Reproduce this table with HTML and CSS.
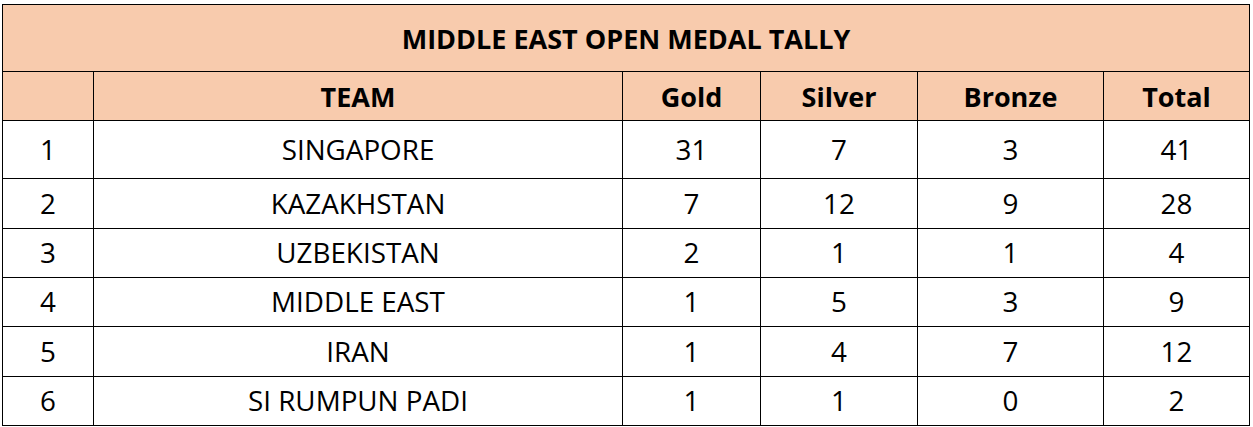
FILE: index.html
```html
<!DOCTYPE html>
<html lang="en">
<head>
<meta charset="utf-8">
<title>Middle East Open Medal Tally</title>
<link rel="stylesheet" href="styles.css">
</head>
<body>
<div class="sheet">
  <table class="tally">
    <colgroup>
      <col class="c-rank">
      <col class="c-team">
      <col class="c-gold">
      <col class="c-silver">
      <col class="c-bronze">
      <col class="c-total">
    </colgroup>
    <thead>
      <tr class="r-title"><th colspan="6">MIDDLE EAST OPEN MEDAL TALLY</th></tr>
      <tr class="r-head">
        <th></th><th>TEAM</th><th>Gold</th><th>Silver</th><th>Bronze</th><th>Total</th>
      </tr>
    </thead>
    <tbody>
      <tr class="r-first"><td>1</td><td>SINGAPORE</td><td>31</td><td>7</td><td>3</td><td>41</td></tr>
      <tr class="r-50"><td>2</td><td>KAZAKHSTAN</td><td>7</td><td>12</td><td>9</td><td>28</td></tr>
      <tr class="r-49"><td>3</td><td>UZBEKISTAN</td><td>2</td><td>1</td><td>1</td><td>4</td></tr>
      <tr class="r-49"><td>4</td><td>MIDDLE EAST</td><td>1</td><td>5</td><td>3</td><td>9</td></tr>
      <tr class="r-50"><td>5</td><td>IRAN</td><td>1</td><td>4</td><td>7</td><td>12</td></tr>
      <tr class="r-49"><td>6</td><td>SI RUMPUN PADI</td><td>1</td><td>1</td><td>0</td><td>2</td></tr>
    </tbody>
  </table>
</div>
</body>
</html>
```

FILE: styles.css
```css
html, body {
  margin: 0;
  padding: 0;
  background: #ffffff;
}

.sheet {
  padding: 4px 0 0 2px;
}

.tally {
  border-collapse: collapse;
  table-layout: fixed;
  width: 1247px;
  font-family: "Open Sans", "Liberation Sans", sans-serif;
  font-size: 27px;
  color: #000000;
}

.c-rank { width: 91px; }
.c-team { width: 529px; }
.c-gold { width: 138px; }
.c-silver { width: 157px; }
.c-bronze { width: 186px; }
.c-total { width: 146px; }

.tally th,
.tally td {
  border: 1px solid #000000;
  padding: 0;
  text-align: center;
  vertical-align: middle;
  line-height: 1;
  white-space: nowrap;
}

.tally th {
  background: #f8cbad;
  font-weight: 700;
}

.r-title { height: 67px; }
.r-head { height: 49px; }
.r-first { height: 58px; }
.r-50 { height: 50px; }
.r-49 { height: 49px; }

.tally td {
  font-weight: 400;
  font-size: 27.8px;
}
```
